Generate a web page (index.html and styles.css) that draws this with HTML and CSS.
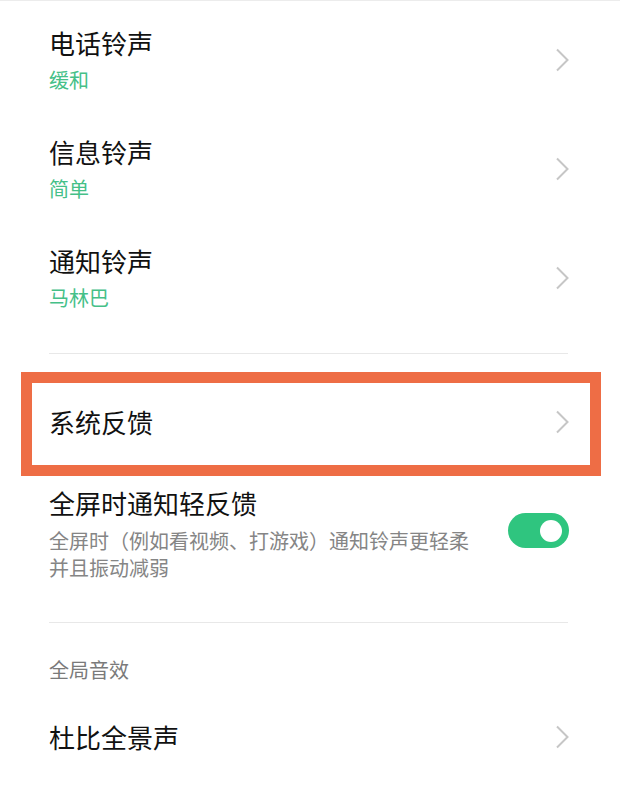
FILE: index.html
```html
<!DOCTYPE html>
<html lang="zh-CN">
<head>
<meta charset="utf-8">
<title>声音与振动</title>
<link rel="stylesheet" href="styles.css">
</head>
<body>
<div class="page">
  <div class="list">
    <div class="row">
      <div class="text">
        <div class="title">电话铃声</div>
        <div class="sub">缓和</div>
      </div>
      <svg class="chev" width="14" height="24" viewBox="0 0 14 24"><polyline points="2,1.5 12.5,12 2,22.5" fill="none" stroke="#c6c6c6" stroke-width="2"/></svg>
    </div>
    <div class="row">
      <div class="text">
        <div class="title">信息铃声</div>
        <div class="sub">简单</div>
      </div>
      <svg class="chev" width="14" height="24" viewBox="0 0 14 24"><polyline points="2,1.5 12.5,12 2,22.5" fill="none" stroke="#c6c6c6" stroke-width="2"/></svg>
    </div>
    <div class="row">
      <div class="text">
        <div class="title">通知铃声</div>
        <div class="sub">马林巴</div>
      </div>
      <svg class="chev" width="14" height="24" viewBox="0 0 14 24"><polyline points="2,1.5 12.5,12 2,22.5" fill="none" stroke="#c6c6c6" stroke-width="2"/></svg>
    </div>
  </div>

  <div class="divider divider-a"></div>

  <div class="highlight">
    <div class="title">系统反馈</div>
    <svg class="chev" width="14" height="24" viewBox="0 0 14 24"><polyline points="2,1.5 12.5,12 2,22.5" fill="none" stroke="#c6c6c6" stroke-width="2"/></svg>
  </div>

  <div class="toggle-row">
    <div class="text">
      <div class="title">全屏时通知轻反馈</div>
      <div class="desc">全屏时（例如看视频、打游戏）通知铃声更轻柔并且振动减弱</div>
    </div>
    <div class="toggle"><div class="knob"></div></div>
  </div>

  <div class="divider divider-b"></div>

  <div class="section-head">全局音效</div>

  <div class="single-row">
    <div class="title">杜比全景声</div>
    <svg class="chev" width="14" height="24" viewBox="0 0 14 24"><polyline points="2,1.5 12.5,12 2,22.5" fill="none" stroke="#c6c6c6" stroke-width="2"/></svg>
  </div>
</div>
</body>
</html>
```

FILE: styles.css
```css
html, body {
  margin: 0;
  padding: 0;
  background: #ffffff;
}

body {
  font-family: "Noto Sans CJK SC", "Noto Sans", sans-serif;
  width: 620px;
  height: 797px;
  overflow: hidden;
}

.page {
  border-top: 1px solid #ececec;
}

.list {
  padding-top: 5px;
}

.row {
  display: flex;
  align-items: center;
  justify-content: space-between;
  padding: 20px 51px 21px 49px;
}

.text {
  display: flex;
  flex-direction: column;
}

.title {
  font-size: 26px;
  line-height: 34px;
  color: #111111;
}

.sub {
  font-size: 20px;
  line-height: 28px;
  color: #45c088;
  margin-top: 6px;
}

.chev {
  display: block;
  flex: none;
}

.divider {
  height: 1px;
  background: #e8e8e8;
  margin-left: 49px;
  margin-right: 52px;
}

.divider-a {
  margin-top: 20px;
}

.highlight {
  margin: 18px 19px 0 21px;
  border: 11px solid #ee6d45;
  padding: 22px 21px 26px 17px;
  display: flex;
  align-items: center;
  justify-content: space-between;
}

.toggle-row {
  margin-top: 10px;
  display: flex;
  align-items: center;
  justify-content: space-between;
  padding: 0 51px 0 49px;
}

.toggle-row .text {
  width: 432px;
}

.desc {
  margin-top: 7px;
  font-size: 20px;
  line-height: 27px;
  color: #858585;
}

.toggle {
  width: 61px;
  height: 35px;
  border-radius: 18px;
  background: #2fc57f;
  display: flex;
  align-items: center;
  justify-content: flex-end;
  padding-right: 7px;
  box-sizing: border-box;
  margin-bottom: 6px;
}

.knob {
  width: 22px;
  height: 22px;
  border-radius: 50%;
  background: #ffffff;
}

.divider-b {
  margin-top: 41px;
}

.section-head {
  margin-top: 33px;
  padding-left: 49px;
  font-size: 20px;
  line-height: 28px;
  color: #7a7a7a;
}

.single-row {
  margin-top: 36px;
  display: flex;
  align-items: center;
  justify-content: space-between;
  padding: 0 51px 0 49px;
}
```
